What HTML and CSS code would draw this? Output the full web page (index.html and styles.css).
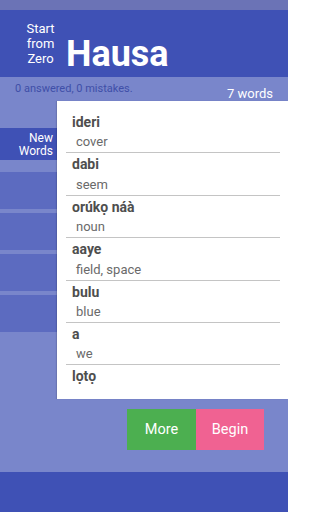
FILE: index.html
```html
<!DOCTYPE html>
<html>
<head>
<meta charset="utf-8">
<link rel="stylesheet" href="styles.css">
</head>
<body>
<div class="app">
  <div class="status"></div>
  <header class="header">
    <div class="tagline">Start<br>from<br>Zero</div>
    <div class="title">Hausa</div>
  </header>
  <main class="main">
    <div class="stats">
      <span class="progress">0 answered, 0 mistakes.</span>
      <span class="count">7 words</span>
    </div>
    <div class="content">
      <nav class="sidebar">
        <div class="tab">New<br>Words</div>
        <div class="stripe"></div>
        <div class="stripe"></div>
        <div class="stripe"></div>
        <div class="stripe"></div>
      </nav>
      <section class="card">
        <div class="row"><div class="word">ideri</div><div class="meaning">cover</div></div>
        <div class="row"><div class="word">dabi</div><div class="meaning">seem</div></div>
        <div class="row"><div class="word">orúkọ náà</div><div class="meaning">noun</div></div>
        <div class="row"><div class="word">aaye</div><div class="meaning">field, space</div></div>
        <div class="row"><div class="word">bulu</div><div class="meaning">blue</div></div>
        <div class="row"><div class="word">a</div><div class="meaning">we</div></div>
        <div class="row last"><div class="word">lọtọ</div></div>
      </section>
    </div>
    <div class="actions">
      <button class="btn more">More</button>
      <button class="btn begin">Begin</button>
    </div>
  </main>
  <footer class="footer"></footer>
</div>
</body>
</html>
```

FILE: styles.css
```css
* { box-sizing: border-box; }
html, body { margin: 0; padding: 0; }
body {
  font-family: Roboto, "Liberation Sans", sans-serif;
  width: 288px;
  height: 512px;
  overflow: hidden;
}
.app {
  display: flex;
  flex-direction: column;
  height: 512px;
  background: #7986cb;
}
.status {
  height: 10px;
  background: #6b73b6;
}
.header {
  height: 67px;
  background: #3f51b5;
  display: flex;
  align-items: center;
  padding-left: 20px;
  gap: 5px;
  color: #fff;
}
.tagline {
  width: 41px;
  text-align: center;
  font-size: 13px;
  line-height: 15px;
}
.title {
  align-self: flex-end;
  margin-bottom: 5px;
  font-size: 36px;
  line-height: 36px;
  font-weight: 700;
}
.main {
  flex: 1;
  display: flex;
  flex-direction: column;
}
.stats {
  height: 24px;
  display: flex;
  justify-content: space-between;
  align-items: center;
  padding: 0 15px;
}
.progress {
  font-size: 11px;
  color: #3f4fa8;
  line-height: 14px;
}
.count {
  align-self: flex-end;
  font-size: 13px;
  line-height: 15px;
  color: #fff;
}
.content {
  display: flex;
  height: 298px;
}
.sidebar {
  width: 57px;
  padding-top: 27px;
  display: flex;
  flex-direction: column;
  gap: 4px;
}
.tab {
  height: 32px;
  background: #3f51b5;
  color: #fff;
  font-size: 12px;
  line-height: 13px;
  text-align: right;
  padding: 4px 4px 0 0;
  margin-bottom: 8px;
}
.stripe {
  height: 37px;
  background: #5c6bc0;
}
.card {
  flex: 1;
  background: #fff;
  padding: 10px 8px 0 9px;
  box-shadow: -1px 0 1px rgba(0,0,0,0.12);
}
.row {
  padding-top: 2px;
  border-bottom: 1px solid #c4c4c4;
  height: 42.4px;
}
.row.last { border-bottom: none; }
.word {
  font-size: 14px;
  font-weight: 700;
  line-height: 18.4px;
  color: #4e4e4e;
  padding-left: 6px;
}
.meaning {
  font-size: 13px;
  line-height: 21px;
  color: #6a6a6a;
  padding-left: 10px;
}
.actions {
  margin-top: 10px;
  display: flex;
  justify-content: flex-end;
  padding-right: 24px;
}
.btn {
  height: 41px;
  border: none;
  color: #fff;
  font-family: Roboto, "Liberation Sans", sans-serif;
  font-size: 14.5px;
  padding: 0;
}
.more { width: 69px; background: #4caf50; }
.begin { width: 68px; background: #f06292; }
.footer {
  height: 40px;
  background: #3f51b5;
}
```
